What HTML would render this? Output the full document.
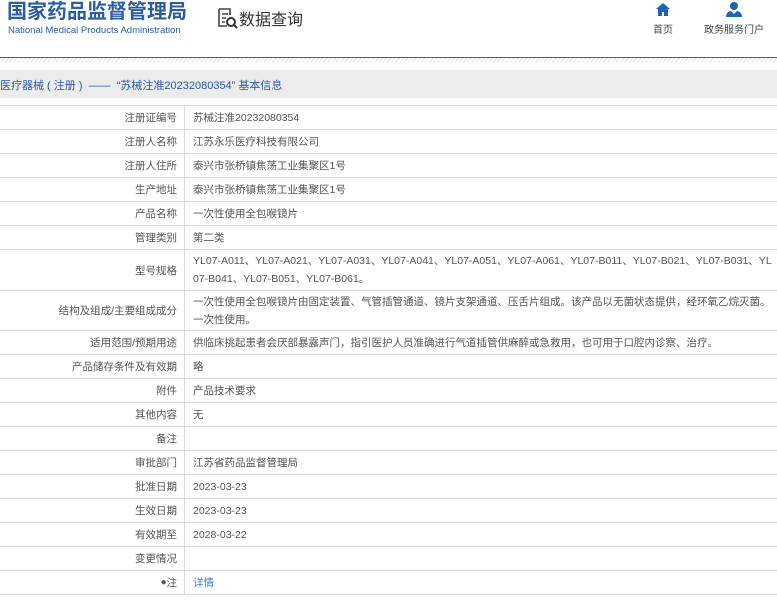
<!DOCTYPE html>
<html><head><meta charset="utf-8"><style>
*{margin:0;padding:0;box-sizing:border-box}
body{width:777px;height:603px;overflow:hidden;background:#fff;font-family:"Liberation Sans","Noto Sans CJK SC",sans-serif;position:relative;color:#333}
.a{position:absolute}
.row{position:absolute;left:0;width:777px;border-bottom:1px solid #ddd;font-size:10.5px;color:#555}
.l{position:absolute;left:0;width:185px;height:100%;border-right:1px solid #ddd;text-align:right;padding-right:7px;display:flex;align-items:center;justify-content:flex-end}
.v{position:absolute;left:193px;right:2px;height:100%;display:flex;align-items:center;line-height:18px;word-break:break-all}
</style></head><body>
<div class="a" style="left:7px;top:0px;font-size:20px;line-height:24px;font-weight:bold;color:#2b5ca8">国家药品监督管理局</div>
<div class="a" style="left:8px;top:25px;font-size:9.5px;line-height:11px;color:#2b5ca8">National Medical Products Administration</div>
<svg class="a" style="left:217px;top:8px" width="22" height="22" viewBox="0 0 22 22"><path d="M2 1h11v6M2 1v17h8" fill="none" stroke="#444" stroke-width="1.6"/><path d="M5 6h6M5 10h4M5 14h3" stroke="#444" stroke-width="1.5"/><circle cx="14" cy="14" r="4" fill="none" stroke="#333" stroke-width="2"/><path d="M17 17l3 3" stroke="#333" stroke-width="2.2"/></svg>
<div class="a" style="left:239px;top:6px;font-size:16px;color:#333">数据查询</div>
<svg class="a" style="left:656px;top:3px" width="14" height="13" viewBox="0 0 14 13"><path d="M7 0L0 6h2v7h4V9h2v4h4V6h2z" fill="#1e63b5"/></svg>
<div class="a" style="left:653px;top:21px;font-size:10px;color:#444">首页</div>
<svg class="a" style="left:726px;top:2px" width="16" height="15" viewBox="0 0 16 15"><circle cx="8" cy="4" r="4" fill="#1e63b5"/><path d="M0 15c0-4 3-6 5-6l3 3 3-3c2 0 5 2 5 6z" fill="#1e63b5"/></svg>
<div class="a" style="left:704px;top:21px;font-size:10px;color:#444">政务服务门户</div>
<div class="a" style="left:0;top:57px;width:777px;height:1px;background:#2f6aa8"></div>
<div class="a" style="left:0;top:58px;width:777px;height:4px;background:repeating-linear-gradient(135deg,#e4e4e4 0 1px,#fff 1px 3px)"></div>
<div class="a" style="left:0;top:70px;width:777px;height:28px;background:#ebebeb"></div>
<div class="a" style="left:0;top:77px;font-size:11px;color:#2b5ca8;white-space:pre">医疗器械 ( 注册 )  ——  “苏械注准20232080354” 基本信息</div>
<div class="a" style="left:0;top:105px;width:777px;height:1px;background:#ddd"></div>
<div class="row" style="top:106px;height:24px"><div class="l">注册证编号</div><div class="v">苏械注准20232080354</div></div>
<div class="row" style="top:130px;height:24px"><div class="l">注册人名称</div><div class="v">江苏永乐医疗科技有限公司</div></div>
<div class="row" style="top:154px;height:24px"><div class="l">注册人住所</div><div class="v">泰兴市张桥镇焦荡工业集聚区1号</div></div>
<div class="row" style="top:178px;height:24px"><div class="l">生产地址</div><div class="v">泰兴市张桥镇焦荡工业集聚区1号</div></div>
<div class="row" style="top:202px;height:24px"><div class="l">产品名称</div><div class="v">一次性使用全包喉镜片</div></div>
<div class="row" style="top:226px;height:24px"><div class="l">管理类别</div><div class="v">第二类</div></div>
<div class="row" style="top:250px;height:41px"><div class="l">型号规格</div><div class="v">YL07-A011、YL07-A021、YL07-A031、YL07-A041、YL07-A051、YL07-A061、YL07-B011、YL07-B021、YL07-B031、YL07-B041、YL07-B051、YL07-B061。</div></div>
<div class="row" style="top:291px;height:40px"><div class="l">结构及组成/主要组成成分</div><div class="v">一次性使用全包喉镜片由固定装置、气管插管通道、镜片支架通道、压舌片组成。该产品以无菌状态提供，经环氧乙烷灭菌。一次性使用。</div></div>
<div class="row" style="top:331px;height:24px"><div class="l">适用范围/预期用途</div><div class="v">供临床挑起患者会厌部暴露声门，指引医护人员准确进行气道插管供麻醉或急救用，也可用于口腔内诊察、治疗。</div></div>
<div class="row" style="top:355px;height:24px"><div class="l">产品储存条件及有效期</div><div class="v">略</div></div>
<div class="row" style="top:379px;height:24px"><div class="l">附件</div><div class="v">产品技术要求</div></div>
<div class="row" style="top:403px;height:24px"><div class="l">其他内容</div><div class="v">无</div></div>
<div class="row" style="top:427px;height:24px"><div class="l">备注</div><div class="v"></div></div>
<div class="row" style="top:451px;height:24px"><div class="l">审批部门</div><div class="v">江苏省药品监督管理局</div></div>
<div class="row" style="top:475px;height:24px"><div class="l">批准日期</div><div class="v">2023-03-23</div></div>
<div class="row" style="top:499px;height:24px"><div class="l">生效日期</div><div class="v">2023-03-23</div></div>
<div class="row" style="top:523px;height:24px"><div class="l">有效期至</div><div class="v">2028-03-22</div></div>
<div class="row" style="top:547px;height:24px"><div class="l">变更情况</div><div class="v"></div></div>
<div class="row" style="top:571px;height:24px"><div class="l"><span style="color:#555;font-size:10px">●</span>注</div><div class="v" style="color:#3a86d8">详情</div></div>
</body></html>
